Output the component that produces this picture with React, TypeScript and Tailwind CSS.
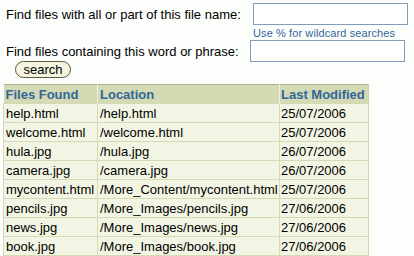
const rows = [
  ["help.html", "/help.html", "25/07/2006"],
  ["welcome.html", "/welcome.html", "25/07/2006"],
  ["hula.jpg", "/hula.jpg", "26/07/2006"],
  ["camera.jpg", "/camera.jpg", "26/07/2006"],
  ["mycontent.html", "/More_Content/mycontent.html", "25/07/2006"],
  ["pencils.jpg", "/More_Images/pencils.jpg", "27/06/2006"],
  ["news.jpg", "/More_Images/news.jpg", "27/06/2006"],
  ["book.jpg", "/More_Images/book.jpg", "27/06/2006"],
];

const App = () => {
  return (
    <div className="w-[414px] h-[256px] overflow-hidden bg-[#fcfefc] text-black text-[13px] leading-[15px] font-['Liberation_Sans',Arial,sans-serif]">
      <div className="flex items-center pt-[3px]">
        <span className="w-[253px] pl-[6px] flex-none whitespace-nowrap">
          Find files with all or part of this file name:
        </span>
        <input
          type="text"
          className="w-[155px] h-[22px] border border-[#7f9db9] bg-white outline-none"
        />
      </div>
      <div className="pl-[253px] pt-[2px] h-[14px] text-[11px] leading-[12px] tracking-[0.1px] text-[#336699] whitespace-nowrap">
        Use % for wildcard searches
      </div>
      <div className="flex items-center pt-[1px]">
        <span className="w-[250px] pl-[6px] flex-none whitespace-nowrap">
          Find files containing this word or phrase:
        </span>
        <input
          type="text"
          className="w-[155px] h-[22px] border border-[#7f9db9] bg-white outline-none"
        />
      </div>
      <div className="pl-[15px] -mt-[1px]">
        <button className="w-[56px] h-[17px] rounded-full border border-[#5a5a3c] bg-[#f4f4df] text-[13px] leading-[15px] flex items-center justify-center">
          search
        </button>
      </div>
      <table className="ml-[3px] mt-[6px] border-collapse">
        <thead>
          <tr className="bg-[#d4dab4] h-[19px]">
            <th className="w-[94px] border-t border-t-[#a9b88f] border-r border-r-[#eef0dc] pl-[2px] text-left font-bold text-[#336699] whitespace-nowrap">
              Files Found
            </th>
            <th className="w-[182px] border-t border-t-[#a9b88f] border-r border-r-[#eef0dc] pl-[2px] text-left font-bold text-[#336699] whitespace-nowrap">
              Location
            </th>
            <th className="w-[89px] border-t border-t-[#a9b88f] border-r border-r-[#c9d0a6] pl-[1px] text-left font-bold text-[#336699] whitespace-nowrap">
              Last Modified
            </th>
          </tr>
        </thead>
        <tbody>
          {rows.map((r) => (
            <tr key={r[0]} className="h-[19px] bg-[#f2f5e3]">
              <td className="border border-[#d4dab4] pl-[2px] whitespace-nowrap">{r[0]}</td>
              <td className="border border-[#d4dab4] pl-[2px] whitespace-nowrap">{r[1]}</td>
              <td className="border border-[#d4dab4] pl-[1px] whitespace-nowrap">{r[2]}</td>
            </tr>
          ))}
        </tbody>
      </table>
    </div>
  );
};

export default App;
